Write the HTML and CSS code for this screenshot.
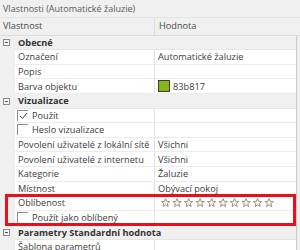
FILE: index.html
```html
<!DOCTYPE html>
<html lang="cs">
<head>
<meta charset="utf-8">
<title>Vlastnosti</title>
<link rel="stylesheet" href="styles.css">
</head>
<body>
<div class="panel">
  <div class="title">Vlastnosti (Automatické žaluzie)</div>
  <div class="head">
    <div class="hc1">Vlastnost</div>
    <div class="hc2">Hodnota</div>
  </div>
  <div class="body">
    <div class="grid">
      <div class="row cat"><div class="gut"><span class="tog"></span></div><div class="name">Obecné</div></div>
      <div class="row"><div class="gut"></div><div class="name">Označení</div><div class="val">Automatické žaluzie</div></div>
      <div class="row"><div class="gut"></div><div class="name">Popis</div><div class="val"></div></div>
      <div class="row"><div class="gut"></div><div class="name">Barva objektu</div><div class="val"><span class="swatch"></span>83b817</div></div>
      <div class="row cat"><div class="gut"><span class="tog"></span></div><div class="name">Vizualizace</div></div>
      <div class="row"><div class="gut"></div><div class="name chk"><span class="box on"><svg width="9" height="8" viewBox="0 0 9 8"><path d="M1 4 L3.5 6.5 L8 1" fill="none" stroke="#444" stroke-width="1"/></svg></span>Použít</div><div class="val"></div></div>
      <div class="row"><div class="gut"></div><div class="name chk"><span class="box"></span>Heslo vizualizace</div><div class="val"></div></div>
      <div class="row"><div class="gut"></div><div class="name">Povolení uživatelé z lokální sítě</div><div class="val">Všichni</div></div>
      <div class="row"><div class="gut"></div><div class="name">Povolení uživatelé z internetu</div><div class="val">Všichni</div></div>
      <div class="row"><div class="gut"></div><div class="name">Kategorie</div><div class="val">Žaluzie</div></div>
      <div class="row"><div class="gut"></div><div class="name">Místnost</div><div class="val">Obývací pokoj</div></div>
      <div class="row"><div class="gut"></div><div class="name">Oblíbenost</div><div class="val stars">
        <svg width="114" height="10" viewBox="0 0 114 10">
          <defs><path id="st" d="M4.6 0.6 L5.8 3.4 L8.8 3.5 L6.4 5.5 L7.2 8.6 L4.6 6.9 L2 8.6 L2.8 5.5 L0.4 3.5 L3.4 3.4 Z" fill="#f5f3ec" stroke="#978f7c" stroke-width="0.95" stroke-linejoin="round"/></defs>
          <use href="#st" x="0"/><use href="#st" x="11.5"/><use href="#st" x="23"/><use href="#st" x="34.5"/><use href="#st" x="46"/><use href="#st" x="57.5"/><use href="#st" x="69"/><use href="#st" x="80.5"/><use href="#st" x="92"/><use href="#st" x="103.5"/>
        </svg></div></div>
      <div class="row"><div class="gut"></div><div class="name chk"><span class="box"></span>Použít jako oblíbený</div><div class="val"></div></div>
      <div class="row cat"><div class="gut"><span class="tog"></span></div><div class="name">Parametry Standardní hodnota</div></div>
      <div class="row"><div class="gut"></div><div class="name">Šablona parametrů</div><div class="val"></div></div>
    </div>
    <div class="scroll"></div>
  </div>
  <div class="highlight"></div>
</div>
</body>
</html>
```
FILE: styles.css
```css
html, body {
  margin: 0;
  padding: 0;
}
body {
  width: 300px;
  height: 250px;
  overflow: hidden;
  background: #f0f0f0;
  font-family: "Open Sans", "Noto Sans", sans-serif;
  font-size: 9.2px;
  color: #3d3d3d;
}
.panel {
  position: relative;
  width: 300px;
  height: 250px;
  overflow: hidden;
  background: #f0f0f0;
}
.title {
  height: 18px;
  line-height: 18px;
  padding-left: 3px;
  font-size: 9px;
  color: #5a5a5a;
  border-bottom: 1px solid #e4e4e4;
  box-sizing: border-box;
}
.head {
  display: flex;
  height: 17.6px;
  box-sizing: border-box;
  border-bottom: 1px solid #dcdcdc;
  color: #4a4a4a;
}
.hc1 {
  width: 155px;
  padding-left: 3px;
  box-sizing: border-box;
  line-height: 16px;
  border-right: 1px solid #dcdcdc;
}
.hc2 {
  flex: 1;
  padding-left: 4px;
  line-height: 16px;
}
.body {
  display: flex;
}
.grid {
  width: 296px;
}
.row {
  display: flex;
  height: 14.6px;
}
.gut {
  width: 15px;
  flex: none;
  display: flex;
  align-items: center;
  padding-left: 3px;
  box-sizing: border-box;
}
.name {
  width: 140px;
  flex: none;
  box-sizing: border-box;
  padding-left: 3px;
  white-space: nowrap;
  overflow: hidden;
  background: #fff;
  border-bottom: 1px solid #ececec;
  border-right: 1px solid #e2e2e2;
  display: flex;
  align-items: center;
}
.val {
  flex: 1;
  box-sizing: border-box;
  padding-left: 3px;
  background: #fff;
  border-bottom: 1px solid #ececec;
  white-space: nowrap;
  display: flex;
  align-items: center;
}
.cat .name {
  flex: 1;
  width: auto;
  background: #f0f0f0;
  border-right: none;
  border-bottom: 1px solid #e6e6e6;
  font-weight: 700;
  color: #333;
  overflow: visible;
}
.tog {
  width: 7px;
  height: 7px;
  border: 1px solid #8a8a8a;
  box-sizing: border-box;
  position: relative;
  background: #f7f7f7;
}
.tog::after {
  content: "";
  position: absolute;
  left: 1px;
  right: 1px;
  top: 2px;
  height: 1px;
  background: #555;
}
.chk {
  padding-left: 2px;
}
.box {
  width: 11px;
  height: 11px;
  flex: none;
  box-sizing: border-box;
  border-top: 1px solid #8c8c8c;
  border-left: 1px solid #8c8c8c;
  margin-right: 4px;
  display: flex;
  align-items: center;
  justify-content: center;
}
.swatch {
  width: 12px;
  height: 12px;
  box-sizing: border-box;
  background: #83b817;
  border: 1px solid #3a3a3a;
  margin-right: 3px;
  flex: none;
}
.stars {
  padding-left: 6px;
}
.stars svg {
  display: block;
}
.scroll {
  width: 4px;
  flex: none;
  border-left: 1px solid #c9c9c9;
  box-sizing: border-box;
  background: #f0f0f0;
}
.highlight {
  position: absolute;
  left: 5px;
  top: 193.5px;
  width: 290.5px;
  height: 32.5px;
  box-sizing: border-box;
  border: 3px solid #e8101a;
}
```
